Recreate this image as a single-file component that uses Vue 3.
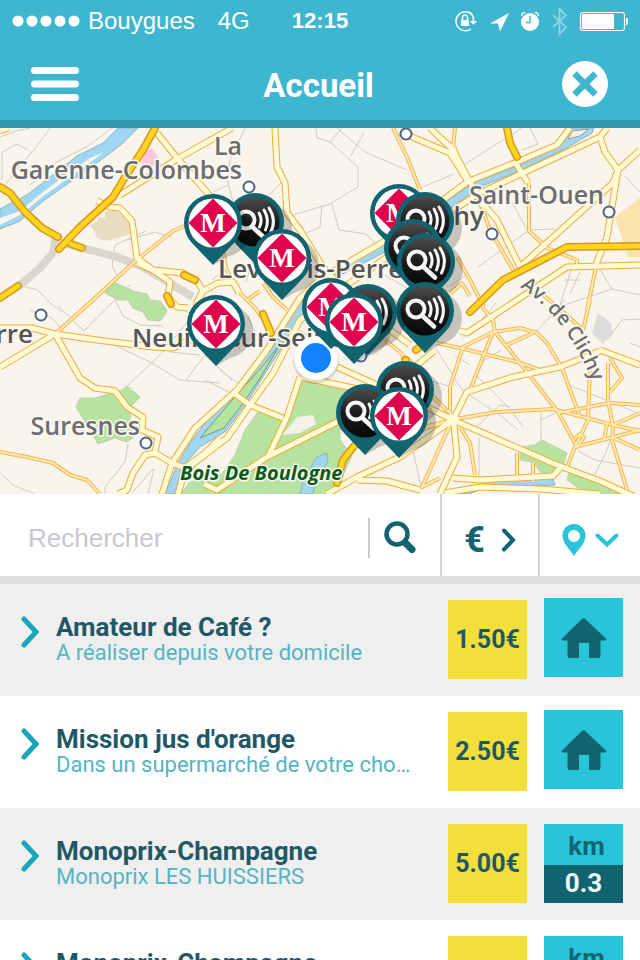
<script setup>
import { ref } from 'vue'

const query = ref('')

const missions = [
  { title: 'Amateur de Café ?', place: 'A réaliser depuis votre domicile', price: '1.50€', home: true },
  { title: 'Mission jus d\'orange', place: 'Dans un supermarché de votre choix habituel', price: '2.50€', home: true },
  { title: 'Monoprix-Champagne', place: 'Monoprix LES HUISSIERS', price: '5.00€', distance: '0.3' },
  { title: 'Monoprix-Champagne', place: 'Monoprix LES HUISSIERS', price: '5.00€', distance: '0.5' },
]

const pins = [
  { x: 399, y: 213, kind: 'shop' },
  { x: 255, y: 222, kind: 'search' },
  { x: 425, y: 221, kind: 'search' },
  { x: 213, y: 223, kind: 'shop' },
  { x: 413, y: 248, kind: 'search' },
  { x: 282, y: 258, kind: 'shop' },
  { x: 426, y: 262, kind: 'search' },
  { x: 331, y: 307, kind: 'shop' },
  { x: 425, y: 311, kind: 'search' },
  { x: 368, y: 313, kind: 'search' },
  { x: 354, y: 322, kind: 'shop' },
  { x: 216, y: 324, kind: 'shop' },
  { x: 405, y: 390, kind: 'search' },
  { x: 365, y: 413, kind: 'search' },
  { x: 399, y: 416, kind: 'shop' },
]

const stations = [
  [406, 134], [249, 187], [609, 212], [492, 234], [41, 315], [146, 443], [361, 356],
]

const lanes = [
  'M0,137 L16,131 L30,128', 'M2,180 L2,152 L17,144 L28,150', 'M50,128 L37,146 L18,168 L0,192',
  'M112,128 L88,146 L55,163 L30,185', 'M146,231 L115,245 L112,265 L118,278', 'M126,240 L155,232 L172,237',
  'M22,286 L38,290 L50,303 L62,312', 'M30,310 L52,318 L60,327', 'M58,306 L84,331 L130,285',
  'M115,300 L123,316 L135,322 L140,325 L163,326', 'M116,346 L150,362 L180,380 L220,383',
  'M127,386 L165,350 L204,300', 'M170,352 L200,355', 'M186,380 L205,355 L232,380',
  'M220,370 L250,392', 'M205,380 L235,395 L250,405', 'M128,444 L125,462 L105,487 L105,494',
  'M0,473 L13,485 L35,494', 'M153,469 L133,492', 'M154,469 L148,494', 'M245,128 L230,160 L228,183 L238,220',
  'M213,192 L228,185', 'M200,220 L250,215 L282,182', 'M316,128 L317,138 L330,142 L358,167 L358,187 L330,204 L293,215',
  'M330,142 L342,128', 'M337,128 L365,152 L407,170', 'M350,157 L364,133', 'M322,205 L320,227 L300,236',
  'M332,204 L339,230 L366,234 L380,248', 'M262,200 L250,220', 'M420,188 L454,174', 'M465,164 L522,128',
  'M522,150 L538,144 L530,128', 'M512,202 L527,230 L555,229', 'M478,267 L528,231', 'M625,176 L640,192',
  'M640,295 L612,289 L564,305', 'M600,270 L612,289', 'M571,270 L558,312', 'M580,272 L570,294',
  'M564,280 L580,280', 'M640,319 L622,320 L607,340', 'M565,300 L535,333', 'M486,315 L463,338',
  'M496,303 L481,321', 'M435,347 L462,390 L501,416 L518,430', 'M420,378 L449,386', 'M475,374 L510,409 L523,427',
  'M479,438 L479,482', 'M541,412 L541,440', 'M541,420 L555,413', 'M569,385 L640,414',
  'M480,363 L501,350', 'M455,356 L470,365', 'M473,430 L500,405 L510,407', 'M578,451 L595,460 L640,468',
  'M592,480 L605,455 L610,441', 'M630,343 L640,347', 'M413,450 L421,487', 'M341,453 L370,440',
  'M252,262 L246,282', 'M228,268 L212,280', 'M220,320 L236,338 L240,350', 'M248,316 L256,335',
  'M385,275 L410,290', 'M450,286 L466,275', 'M300,330 L320,345',
]

const streets = [
  'M82,310 L133,263 L173,231 L187,225', 'M93,300 L55,334', 'M0,452 L27,457 L53,463 L70,475 L87,480 L100,494',
  'M223,250 L226,268 L233,283', 'M247,300 L260,291', 'M240,293 L255,308 L268,326', 'M263,283 L273,297 L287,310',
  'M393,128 L407,157 L420,190', 'M430,128 L455,148 L458,160', 'M455,128 L453,148',
  'M529,183 L529,231 L547,248 L577,260 L577,267', 'M480,203 L490,230 L515,273',
  'M457,257 L470,280 L484,307', 'M450,294 L462,283 L470,296', 'M450,420 L450,387 L463,347 L493,332 L520,328 L537,333 L547,343 L562,368 L580,417',
  'M493,332 L470,390', 'M482,307 L493,320 L495,332 L527,372 L558,412 L577,447',
  'M437,343 L460,348 L517,362 L540,370', 'M507,345 L533,333', 'M590,367 L588,420 L575,447 L567,467',
  'M608,363 L608,400 L613,427 L612,440 L627,490', 'M610,358 L622,378 L610,392',
  'M450,420 L497,412 L553,409 L587,418 L613,425 L640,431', 'M558,413 L610,403 L640,405',
  'M575,447 L610,438 L640,430', 'M613,425 L640,413', 'M612,437 L640,450', 'M604,440 L607,424',
  'M575,438 L580,434 L584,437 L577,447', 'M517,453 L517,478', 'M533,462 L533,482', 'M460,427 L470,443 L475,475',
  'M450,425 L422,487 L440,478', 'M420,488 L400,487', 'M543,295 L560,309 L583,330', 'M590,300 L583,330',
  'M587,310 L596,267', 'M453,420 L420,430 L395,440', 'M385,340 L400,352 L416,370', 'M453,420 L427,426 L400,427',
  'M180,490 L183,473', 'M455,418 L430,394 L410,360',
]

const roads = [
  'M97,201 L110,207 L120,208 L132,221 L137,258 L153,270 L170,282 L168,297 L177,307 L188,308',
  'M137,263 L153,270 L183,273 L197,281 L203,291 L197,302 L196,312', 'M203,291 L218,283 L233,282 L239,293',
  'M157,133 L177,158 L212,198', 'M232,128 L177,159 L120,195', 'M0,131 L8,128',
  'M0,328 L32,328 L55,334 L97,340 L153,347 L173,348 L200,335', 'M0,367 L20,355 L55,334',
  'M55,334 L80,378 L95,388 L115,391 L127,407 L143,417 L142,430 L158,437 L155,453 L145,455 L133,473 L127,490 L118,494',
  'M155,453 L172,463 L195,472', 'M162,494 L172,463 L195,428 L237,390 L267,350 L300,298 L323,277 L347,263 L380,244 L443,200 L467,182 L517,162 L557,145 L570,128',
  'M178,494 L185,470 L227,438 L250,405 L273,373 L300,320 L340,290 L390,255 L450,212 L480,193 L527,171 L570,151 L600,137 L607,128',
  'M183,469 L205,453 L220,438', 'M275,128 L277,167 L285,183 L287,213 L300,230 L323,267 L345,292',
  'M204,484 L217,490 L267,457 L337,422 L370,410', 'M300,377 L287,417 L268,457', 'M235,394 L250,405 L283,418',
  'M300,377 L363,390', 'M337,367 L377,385 L427,407 L453,420',
  'M453,420 L400,457 L357,477 L327,494', 'M357,480 L387,481 L420,490', 'M360,325 L390,330 L410,345',
  'M453,420 L467,392 L513,377 L560,367 L600,351', 'M600,350 L640,365', 'M453,420 L557,465 L600,481 L633,496',
  'M454,425 L457,457 L440,494', 'M453,478 L480,480 L553,476 L563,465', 'M445,493 L480,487 L540,489 L600,494',
  'M400,132 L450,153 L467,180', 'M430,128 L453,150 L470,182 L483,204 L497,220 L520,267',
  'M520,267 L613,183 L618,170 L640,150', 'M600,137 L605,152 L618,170 L607,237 L595,267',
  'M460,331 L467,333 L517,300 L567,267 L640,265', 'M515,162 L528,183', 'M434,351 L416,366',
]

const highways = [
  'M0,187 L10,193 L25,212 L42,228 L58,237', 'M155,128 L143,150 L127,174 L113,197 L80,227 L59,249',
  'M0,298 L18,286', 'M71,244 L82,248', 'M507,128 L510,143 L517,157', 'M470,312 L503,280 L567,247 L640,246',
  'M355,445 L343,460 L337,483', 'M184,275 L195,280', 'M167,296 L171,304', 'M263,314 L271,333', 'M416,350 L434,335', 'M405,360 L406,360',
]
</script>

<template>
  <div class="app">
    <header class="top">
      <div class="status">
        <div class="carrier">
          <svg class="dots" viewBox="0 0 68 12" aria-hidden="true">
            <circle v-for="n in 5" :key="n" :cx="n * 14 - 8" cy="6" r="5.5" />
          </svg>
          <span>Bouygues</span>
          <span class="network">4G</span>
        </div>
        <time class="clock">12:15</time>
        <svg class="indicators" viewBox="0 0 176 30" aria-hidden="true">
          <g fill="none" stroke="#fff" stroke-width="1.5">
            <path d="M20 8.500A9.500 9.500 0 1 0 19 23" />
            <path d="M17 6A9.500 9.500 0 0 1 21.500 15" />
            <path d="M10.500 14v-2.500a2.500 2.500 0 0 1 5 0V14" />
          </g>
          <path fill="#fff" d="M9 14h8v6H9zM18 15h7l-3.500 4z" />
          <path fill="#fff" d="M57 7L38 17.500h8l2 8z" />
          <circle cx="78" cy="16" r="9" fill="#fff" />
          <path d="M78 10v6.500h-4" fill="none" stroke="#3fb6d0" stroke-width="1.500" />
          <path d="M70 10q-1-3 3-3.500M86 10q1-3-3-3.500" fill="none" stroke="#fff" stroke-width="1.500" />
          <path d="M101 9l13 12-6.500 7V3l6.500 6.500L101 21" fill="none" stroke="#8fd5e3" stroke-width="1.800" />
          <rect x="128.500" y="6.500" width="44" height="18" rx="2.500" fill="none" stroke="#fff" stroke-width="1.200" />
          <rect x="130" y="8" width="32" height="15" rx="1" fill="#fff" />
          <path d="M174 12q2.500 0 2.500 3.500T174 19z" fill="#fff" />
        </svg>
      </div>
      <div class="titlebar">
        <button class="icon-button menu" type="button" aria-label="Menu">
          <svg viewBox="0 0 48 36"><path d="M3.500 4.500h41M3.500 18h41M3.500 31.500h41" stroke="#fff" stroke-width="7" stroke-linecap="round" /></svg>
        </button>
        <h1>Accueil</h1>
        <button class="icon-button close" type="button" aria-label="Fermer">
          <svg viewBox="0 0 46 46">
            <circle cx="23" cy="23" r="23" fill="#fff" />
            <path d="M12.500 12.500l21 21M33.500 12.500l-21 21" stroke="#3fb6d0" stroke-width="6.500" />
          </svg>
        </button>
      </div>
    </header>

    <svg class="map" viewBox="0 128 640 366" role="img" aria-label="Carte">
      <defs>
        <linearGradient id="disc" x1="0" y1="0" x2="0" y2="1">
          <stop offset="0" stop-color="#4c4c4c" />
          <stop offset="0.5" stop-color="#1c1c1c" />
          <stop offset="1" stop-color="#080808" />
        </linearGradient>
        <g id="pin-shadow"><circle cx="10" cy="7" r="27" /><path d="M-14 20L0 42L30 25z" /></g>
        <path id="pin-body" d="M-21 20A29 29 0 1 1 21 20L0 42z" />
        <path id="avenue-line" d="M520 287Q568 318 594 386" />
      </defs>
      <rect y="128" width="640" height="366" fill="#f9f5ed" />

      <g class="park">
        <path d="M105 293L112 281L133 291L147 294L150 300L160 301L167 310L165 315L160 321L148 320L143 312L133 308L128 300L118 300z" />
        <path d="M80 398L95 398L122 390L127 386L140 397L132 405L130 420L133 438L127 442L115 438L98 444L87 425L76 407z" />
        <path d="M303 380L360 390L340 400L340 440L352 455L335 494H180L190 482L222 474L235 455L245 430L258 412L284 418z" />
        <path d="M520 447L535 445L542 440L567 453L563 467L550 473L541 473L533 462L520 460z" />
        <path d="M570 470L630 494H587L567 480z" />
      </g>
      <path fill="#f6f1e8" d="M282 435L297 417L313 415L316 424L300 433z" />
      <path fill="#e8dcc3" d="M90 225L97 222L99 217L105 218V211L117 211L128 220L131 234L107 241L97 238L95 232z" />
      <path fill="#f8e4ac" d="M615 217L640 198V257H628z" />
      <path fill="#fbc9de" d="M152 148L161 162L138 172L145 153z" />
      <path fill="#dcdcdc" d="M598 313L611 323L613 332L603 344L592 333z" />

      <g class="water">
        <path d="M118 128L103 143L77 156L53 175L27 195L0 209V229L20 221L43 201L70 182L97 163L123 143L138 128z" />
        <path d="M175 494L182 467L200 447L226 431L247 402L280 350L300 317L335 278L383 253L453 207L477 188L517 172L563 150L592 133L594 128H568L560 146L517 166L473 183L447 201L383 246L333 269L300 298L270 342L235 388L205 423L190 443L178 463L165 494z" />
        <path d="M300 494L303 480L317 457L327 453L328 462L317 477L313 494z" />
        <path d="M483 481L553 479L555 485L483 487zM455 494L483 485V489L468 494z" />
      </g>
      <path fill="#f9f5ed" d="M0 218L20 211L43 192L67 174L90 158L104 152L95 159L70 177L42 197L22 214L0 225z" />
      <path class="island" d="M280 344L262 367L238 393L222 412L200 438L224 428L244 402L262 375z" />
      <path fill="#f6f1e8" stroke="#999" d="M568 139L572 131L589 129L580 136z" />

      <path v-for="d in lanes" :key="d" :d="d" class="lane" />
      <path class="viaduct" d="M56 236L53 253L40 268L20 285M60 242L117 257L143 267L193 297" />
      <path v-for="d in streets" :key="d" :d="d" class="street-edge" />
      <path v-for="d in roads" :key="d" :d="d" class="road-edge" />
      <path v-for="d in streets" :key="d" :d="d" class="street" />
      <path v-for="d in roads" :key="d" :d="d" class="road" />
      <path v-for="d in highways" :key="d" :d="d" class="highway-edge" />
      <path v-for="d in highways" :key="d" :d="d" class="highway" />
      <circle cx="453" cy="420" r="6" fill="#fffbd6" />

      <circle v-for="[x, y] in stations" :key="x" :cx="x" :cy="y" r="5.500" fill="#fff" stroke="#4c6383" stroke-width="2" />

      <g class="place">
        <text x="242" y="155" text-anchor="end">La</text>
        <text x="242" y="179" text-anchor="end">Garenne-Colombes</text>
        <text x="604" y="204" text-anchor="end">Saint-Ouen</text>
        <text x="140" y="435" text-anchor="end">Suresnes</text>
      </g>
      <g class="place strong">
        <text x="484" y="225" text-anchor="end">Clichy</text>
        <text x="218" y="278">Levallois-Perret</text>
        <text x="132" y="347">Neuilly-sur-Seine</text>
        <text x="33" y="343" text-anchor="end">Nanterre</text>
      </g>
      <text class="avenue"><textPath href="#avenue-line">Av. de Clichy</textPath></text>
      <text class="wood" x="180" y="480">Bois De Boulogne</text>

      <circle cx="316" cy="361" r="23" fill="#000" opacity="0.12" />
      <circle cx="316" cy="358" r="22" fill="#fff" />
      <circle cx="316" cy="358" r="15" fill="#1583ff" />

      <g v-for="pin in pins" :key="`${pin.x}-${pin.y}`" :transform="`translate(${pin.x} ${pin.y})`">
        <use href="#pin-shadow" opacity="0.2" />
        <use href="#pin-body" fill="#11646f" />
        <template v-if="pin.kind === 'shop'">
          <circle r="24.500" fill="#fff" />
          <path d="M0-24.500L24.500 0L0 24.500L-24.500 0z" fill="#e0044f" />
          <text class="letter" y="9" text-anchor="middle">M</text>
        </template>
        <template v-else>
          <circle r="24.500" fill="url(#disc)" />
          <g fill="none" stroke="#f6f6f6" stroke-linecap="round">
            <circle cx="-9" cy="-2" r="8.500" stroke-width="4" />
            <path d="M-2.500 5L9 15.500" stroke-width="4.500" />
            <path d="M4-9Q8-2 4.500 5" stroke-width="3" />
            <path d="M9-12Q15-2 10.500 8" stroke-width="3" />
            <path d="M14-14Q22-2 15.500 11" stroke-width="3" />
          </g>
        </template>
      </g>
    </svg>

    <form class="toolbar" @submit.prevent>
      <div class="search">
        <input v-model="query" type="search" placeholder="Rechercher" aria-label="Rechercher" />
        <button class="icon-button go" type="submit" aria-label="Lancer la recherche">
          <svg viewBox="0 0 34 34" fill="none" stroke="#11646f">
            <circle cx="14" cy="13" r="10.500" stroke-width="4.500" />
            <path d="M22.500 22l6.500 6.500" stroke-width="7" stroke-linecap="round" />
            <path d="M20 19l4 4" stroke-width="4" />
          </svg>
        </button>
      </div>
      <button class="filter price-filter" type="button" aria-label="Trier par prix">
        <span>€</span>
        <svg class="chevron" viewBox="0 0 14 24"><path d="M2 2.500L11 12L2 21.500" /></svg>
      </button>
      <button class="filter place-filter" type="button" aria-label="Trier par distance">
        <svg class="marker" viewBox="0 0 24 32">
          <path fill="#29c3da" fill-rule="evenodd" d="M12 0a11.500 11.500 0 0 0-11.500 11.500C.500 20 8 25 12 32c4-7 11.500-12 11.500-20.500A11.500 11.500 0 0 0 12 0zM12 6a6 6 0 1 1 0 12a6 6 0 0 1 0-12z" />
        </svg>
        <svg class="chevron-down" viewBox="0 0 24 14"><path d="M2.500 2.500L12 11.500L21.500 2.500" /></svg>
      </button>
    </form>

    <ul class="missions">
      <li v-for="(mission, index) in missions" :key="index">
        <a href="#" class="mission">
          <svg class="arrow" viewBox="0 0 18 32"><path d="M3 3L15 16L3 29" /></svg>
          <span class="texts">
            <strong>{{ mission.title }}</strong>
            <span class="where">{{ mission.place }}</span>
          </span>
          <span class="tile price">{{ mission.price }}</span>
          <span v-if="mission.home" class="tile home">
            <svg viewBox="0 0 46 40"><path d="M23 0L45 20.500Q46.500 22.500 44 22.500H39.500V38Q39.500 40 37.500 40H28V25H18V40H8.500Q6.500 40 6.500 38V22.500H2Q-.500 22.500 1 20.500L21 1Q23-.500 25 1z" fill="#11646f" /></svg>
          </span>
          <span v-else class="tile distance">
            <span class="unit">km</span>
            <span class="value">{{ mission.distance }}</span>
          </span>
        </a>
      </li>
    </ul>
  </div>
</template>

<style>
body {
  background: #fff;
}
</style>

<style scoped>
* {
  box-sizing: border-box;
}

.app {
  display: flex;
  flex-direction: column;
  height: 100vh;
  overflow: hidden;
  font-family: Roboto, sans-serif;
}

.top {
  flex: none;
  background: #3fb6d0;
  border-bottom: 8px solid #3397ad;
  color: #fff;
}

.status {
  display: grid;
  grid-template-columns: 1fr auto 1fr;
  align-items: center;
  height: 40px;
  padding: 2px 12px 0;
  font: 24px/28px "Liberation Sans", sans-serif;
}

.carrier {
  display: flex;
  align-items: center;
  gap: 8px;
}

.dots {
  width: 68px;
  height: 12px;
  fill: #fff;
}

.network {
  margin-left: 15px;
}

.clock {
  font-size: 22px;
  font-weight: 700;
}

.indicators {
  justify-self: end;
  width: 176px;
  height: 30px;
}

.titlebar {
  display: grid;
  grid-template-columns: 48px 1fr 46px;
  align-items: center;
  height: 80px;
  padding: 0 32px 0 31px;
}

h1 {
  margin: 0;
  padding: 12px 4px 0 0;
  font-size: 33px;
  line-height: 40px;
  text-align: center;
}

button {
  margin: 0;
  padding: 0;
  border: 0;
  background: none;
  font-family: inherit;
  cursor: pointer;
}

button svg {
  display: block;
}

.menu {
  width: 48px;
  height: 36px;
  margin-top: 8px;
}

.close {
  width: 46px;
  height: 46px;
  margin-top: 8px;
}

.map {
  display: block;
  flex: none;
  width: 100%;
}

.park path {
  fill: #b7e3a0;
  stroke: #c3cdb4;
}

.water path {
  fill: #9fd7f2;
  stroke: #8fb2bd;
}

.island {
  fill: #b7e3a0;
  stroke: #6f9a80;
}

.lane,
.viaduct,
.street,
.street-edge,
.road,
.road-edge,
.highway,
.highway-edge {
  fill: none;
  stroke-linejoin: round;
}

.lane {
  stroke: #cdcac4;
}

.viaduct {
  stroke: #d8d6cf;
  stroke-width: 8px;
}

.street-edge {
  stroke: #f4b54b;
  stroke-width: 4px;
}

.street {
  stroke: #fdeab4;
  stroke-width: 2px;
}

.road-edge {
  stroke: #f2ab35;
  stroke-width: 7px;
}

.road {
  stroke: #fffbd6;
  stroke-width: 5px;
}

.highway-edge {
  stroke: #dd9420;
  stroke-width: 8px;
  stroke-linecap: round;
}

.highway {
  stroke: #ffd51f;
  stroke-width: 5px;
  stroke-linecap: round;
}

.place,
.avenue,
.wood {
  paint-order: stroke;
  stroke: #fbf8f2;
  stroke-width: 3px;
  stroke-linejoin: round;
}

.place {
  fill: #6d6d6d;
  font: 600 25px "Open Sans", sans-serif;
}

.strong {
  fill: #555;
  font-size: 26px;
}

.avenue {
  fill: #6d6d6d;
  font: 600 20px "Open Sans", sans-serif;
}

.wood {
  fill: #0b5c14;
  font: italic 700 20px "Open Sans", sans-serif;
}

.letter {
  fill: #fff;
  font: 700 27px "Liberation Serif", serif;
}

.toolbar {
  display: flex;
  flex: none;
  height: 90px;
  border-bottom: 8px solid #dedede;
  background: #fff;
}

.search {
  display: flex;
  flex: 1;
  align-items: center;
  min-width: 0;
  padding: 6px 0 0 28px;
}

input {
  flex: 1;
  min-width: 0;
  height: 48px;
  padding: 0;
  border: 0;
  outline: 0;
  background: none;
  color: #11646f;
  font: 26px/48px "Liberation Sans", sans-serif;
  appearance: none;
}

input::placeholder {
  color: #c9c8ce;
  opacity: 1;
}

.go {
  width: 72px;
  height: 40px;
  padding-left: 13px;
  border-left: 2px solid #ccc;
}

.go svg {
  width: 34px;
  height: 34px;
}

.filter {
  display: flex;
  align-items: center;
  justify-content: center;
  padding-top: 10px;
  border-left: 2px solid #d6d6d6;
}

.price-filter {
  gap: 17px;
  width: 98px;
  color: #11646f;
  font-size: 36px;
  font-weight: 700;
}

.place-filter {
  gap: 9px;
  width: 102px;
}

.chevron {
  width: 14px;
  height: 24px;
}

.chevron-down {
  width: 24px;
  height: 14px;
}

.marker {
  width: 24px;
  height: 32px;
}

.chevron path,
.chevron-down path,
.arrow path {
  fill: none;
  stroke: #11646f;
  stroke-width: 4px;
  stroke-linecap: round;
}

.chevron-down path {
  stroke: #29c3da;
}

.missions {
  flex: 1;
  min-height: 0;
  margin: 0;
  padding: 0;
  overflow: hidden;
  list-style: none;
}

.missions li:nth-child(odd) {
  background: #efefef;
}

.mission {
  display: flex;
  align-items: flex-start;
  height: 112px;
  padding: 0 17px 0 21px;
  color: #1f5866;
  text-decoration: none;
}

.arrow {
  flex: none;
  width: 18px;
  height: 32px;
  margin-top: 32px;
}

.arrow path {
  stroke: #1ba5b8;
  stroke-width: 5px;
}

.texts {
  display: flex;
  flex: 1;
  flex-direction: column;
  min-width: 0;
  padding: 28px 36px 0 17px;
}

.texts strong {
  font-size: 26px;
  line-height: 30px;
  white-space: nowrap;
}

.where {
  overflow: hidden;
  padding-bottom: 6px;
  color: #56b4c3;
  font-size: 22px;
  line-height: 22px;
  text-overflow: ellipsis;
  white-space: nowrap;
}

.tile {
  display: flex;
  flex: none;
  align-items: center;
  justify-content: center;
  width: 79px;
  height: 79px;
  margin-top: 16px;
  font-size: 26px;
  font-weight: 700;
}

.price {
  background: #f3df3b;
  font-size: 25px;
}

.home,
.distance {
  margin-left: 17px;
  background: #29c3da;
}

.home {
  margin-top: 14px;
}

.home svg {
  width: 46px;
  height: 40px;
}

.distance {
  flex-direction: column;
  align-items: stretch;
  color: #0e6773;
  text-align: center;
}

.unit {
  height: 41px;
  padding: 4px 0 0 6px;
  line-height: 37px;
}

.value {
  height: 38px;
  background: #11646f;
  color: #eef7f8;
  line-height: 36px;
}
</style>
